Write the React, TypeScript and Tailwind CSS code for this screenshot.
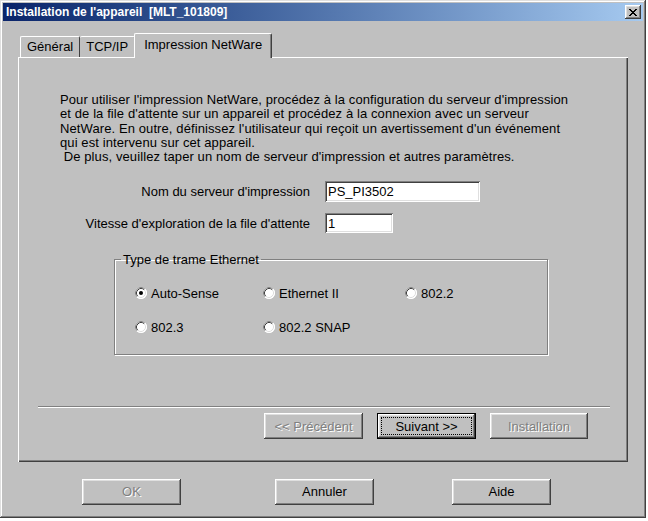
import React from "react";

const raised =
  "shadow-[inset_-1px_-1px_0_#404040,inset_1px_1px_0_#ffffff,inset_-2px_-2px_0_#808080,inset_2px_2px_0_#dfdfdf]";
const sunken =
  "shadow-[inset_1px_1px_0_#808080,inset_-1px_-1px_0_#ffffff,inset_2px_2px_0_#404040,inset_-2px_-2px_0_#dfdfdf]";

function Radio({ checked }: { checked?: boolean }) {
  return (
    <svg width="12" height="12" viewBox="0 0 12 12" className="shrink-0">
      <circle cx="6" cy="6" r="6" fill="#ffffff" />
      <path d="M2.11 9.89 A5.5 5.5 0 0 1 9.89 2.11" stroke="#808080" strokeWidth="1" fill="none" />
      <path d="M2.82 9.18 A4.5 4.5 0 0 1 9.18 2.82" stroke="#404040" strokeWidth="1" fill="none" />
      <path d="M9.89 2.11 A5.5 5.5 0 0 1 2.11 9.89" stroke="#ffffff" strokeWidth="1" fill="none" />
      <path d="M9.18 2.82 A4.5 4.5 0 0 1 2.82 9.18" stroke="#dfdfdf" strokeWidth="1" fill="none" />
      {checked && <circle cx="6" cy="6" r="2" fill="#000000" />}
    </svg>
  );
}

function RadioItem({ label, checked }: { label: string; checked?: boolean }) {
  return (
    <div className="flex items-center gap-[4px] h-[14px]">
      <Radio checked={checked} />
      <span>{label}</span>
    </div>
  );
}

function Btn({
  label,
  disabled,
  isDefault,
  className,
}: {
  label: string;
  disabled?: boolean;
  isDefault?: boolean;
  className: string;
}) {
  if (isDefault) {
    return (
      <div className={`h-[26px] border border-black bg-[#c0c0c0] ${className}`}>
        <div className={`h-full w-full p-[3px] ${raised}`}>
          <div className="h-full w-full border border-dotted border-black flex items-center justify-center">
            {label}
          </div>
        </div>
      </div>
    );
  }
  return (
    <div
      className={`h-[26px] flex items-center justify-center bg-[#c0c0c0] ${raised} ${className} ${
        disabled ? "text-[#808080] [text-shadow:1px_1px_0_#ffffff]" : "text-black"
      }`}
    >
      {label}
    </div>
  );
}

export default function App() {
  return (
    <div className="w-[648px] h-[521px] bg-white overflow-hidden [font-family:'Liberation_Sans',Arial,sans-serif] text-[13px] text-black">
      <div
        className={`w-[646px] h-[518px] bg-[#c0c0c0] p-[3px] flex flex-col shadow-[inset_-1px_-1px_0_#404040,inset_1px_1px_0_#dfdfdf,inset_-2px_-2px_0_#808080,inset_2px_2px_0_#ffffff]`}
      >
        {/* Title bar */}
        <div className="h-[18px] shrink-0 flex items-center justify-between pl-[3px] pr-[2px] bg-gradient-to-r from-[#0a246a] to-[#a6caf0]">
          <span className="text-white font-bold text-[12px] whitespace-pre leading-none">
            {"Installation de l'appareil  [MLT_101809]"}
          </span>
          <div
            className={`w-[16px] h-[14px] bg-[#c0c0c0] flex items-center justify-center ${raised}`}
          >
            <svg width="8" height="7" viewBox="0 0 8 7">
              <path d="M0 0h2v1h1v1h2v-1h1v-1h2v1h-1v1h-1v1h-1v1h1v1h1v1h1v1h-2v-1h-1v-1h-2v1h-1v1h-2v-1h1v-1h1v-1h1v-1h-1v-1h-1v-1h-1z" fill="#000" />
            </svg>
          </div>
        </div>

        {/* Body */}
        <div className="flex-1 flex flex-col pl-[15px] pt-[11px]">
          {/* Tabs */}
          <div className="flex items-end h-[25px] pl-[2px] relative z-10">
            <div className="h-[21px] px-[6px] flex items-center border-t border-l border-white border-r border-r-[#404040] rounded-t-[2px]">
              Général
            </div>
            <div className="h-[21px] px-[6px] flex items-center border-t border-white border-r border-r-[#404040] rounded-t-[2px]">
              TCP/IP
            </div>
            <div className="h-[25px] -mb-[1px] -ml-[1px] px-[9px] pb-[3px] flex items-center bg-[#c0c0c0] border-t border-l border-white border-r border-r-[#404040] rounded-t-[2px] shadow-[inset_-1px_0_0_#808080]">
              Impression NetWare
            </div>
          </div>

          {/* Panel */}
          <div
            className={`w-[610px] h-[405px] flex flex-col shadow-[inset_1px_1px_0_#ffffff,inset_-1px_-1px_0_#404040,inset_-2px_-2px_0_#808080]`}
          >
            <div className="pl-[42px] pt-[36px] leading-[14.25px] tracking-[0.1px]">
              <div>Pour utiliser l'impression NetWare, procédez à la configuration du serveur d'impression</div>
              <div>et de la file d'attente sur un appareil et procédez à la connexion avec un serveur</div>
              <div>NetWare. En outre, définissez l'utilisateur qui reçoit un avertissement d'un événement</div>
              <div>qui est intervenu sur cet appareil.</div>
              <div className="whitespace-pre"> De plus, veuillez taper un nom de serveur d'impression et autres paramètres.</div>
            </div>

            <div className="flex items-center mt-[17px] gap-[15px]">
              <div className="w-[292px] text-right">Nom du serveur d'impression</div>
              <div className={`w-[155px] h-[21px] bg-white pl-[3px] flex items-center ${sunken}`}>PS_PI3502</div>
            </div>
            <div className="flex items-center mt-[11px] gap-[15px]">
              <div className="w-[292px] text-right">Vitesse d'exploration de la file d'attente</div>
              <div className={`w-[68px] h-[20px] bg-white pl-[3px] flex items-center ${sunken}`}>1</div>
            </div>

            <fieldset className="ml-[96px] mt-[19px] w-[434px] border border-[#808080] shadow-[1px_1px_0_#ffffff,inset_1px_1px_0_#ffffff] pt-[19px] pb-[20px]">
              <legend className="ml-[6px] px-[2px] leading-[15px]">Type de trame Ethernet</legend>
              <div className="grid grid-cols-[128px_142px_auto] gap-y-[20px] pl-[20px]">
                <RadioItem label="Auto-Sense" checked />
                <RadioItem label="Ethernet II" />
                <RadioItem label="802.2" />
                <RadioItem label="802.3" />
                <RadioItem label="802.2 SNAP" />
              </div>
            </fieldset>

            <div className="mt-[51px] ml-[20px] mr-[18px] h-[2px] border-t border-[#808080] border-b border-b-white" />

            <div className="flex justify-end gap-[14px] pr-[40px] mt-[5px]">
              <Btn label="<< Précédent" disabled className="w-[99px]" />
              <Btn label="Suivant >>" isDefault className="w-[99px]" />
              <Btn label="Installation" disabled className="w-[98px]" />
            </div>
          </div>

          {/* Bottom buttons */}
          <div className="flex mt-[17px] pl-[64px]">
            <Btn label="OK" disabled className="w-[99px]" />
            <Btn label="Annuler" className="w-[99px] ml-[94px]" />
            <Btn label="Aide" className="w-[99px] ml-[78px]" />
          </div>
        </div>
      </div>
    </div>
  );
}
